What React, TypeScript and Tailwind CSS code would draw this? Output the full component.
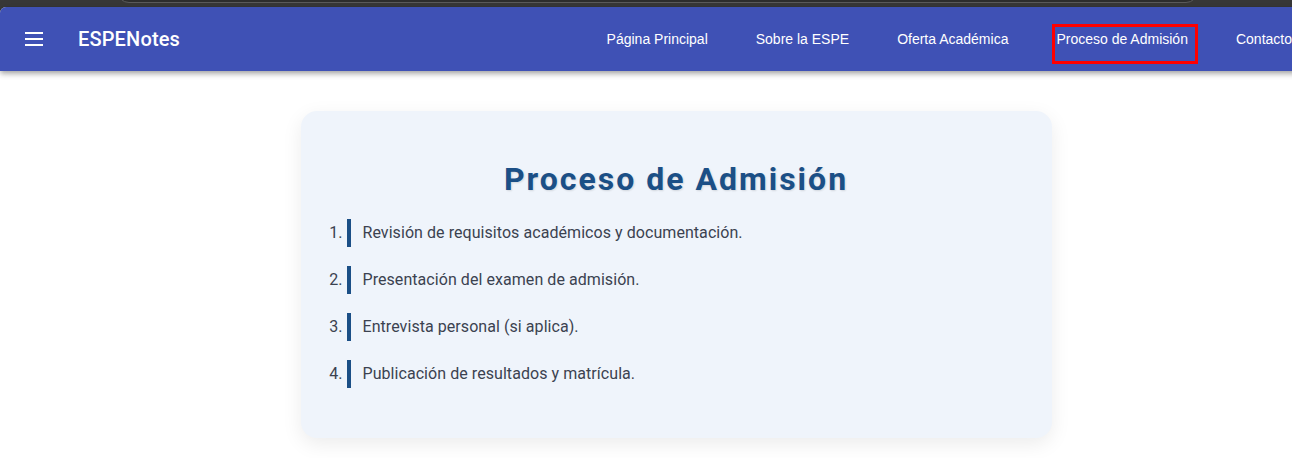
const links = [
  "Página Principal",
  "Sobre la ESPE",
  "Oferta Académica",
  "Proceso de Admisión",
  "Contacto",
];

const steps = [
  "Revisión de requisitos académicos y documentación.",
  "Presentación del examen de admisión.",
  "Entrevista personal (si aplica).",
  "Publicación de resultados y matrícula.",
];

function MenuIcon() {
  return (
    <svg width="18" height="14" viewBox="0 0 18 14" fill="white">
      <rect x="0" y="0" width="18" height="2" />
      <rect x="0" y="6" width="18" height="2" />
      <rect x="0" y="12" width="18" height="2" />
    </svg>
  );
}

export default function App() {
  return (
    <div className="min-h-screen w-full overflow-hidden bg-[#383838]">
      {/* Browser chrome strip */}
      <div className="relative h-[7px] bg-[#383838]">
        <div className="absolute left-[117px] top-[-30px] h-[33px] w-[1081px] rounded-[12px] border border-[#5c5c5c] bg-[#2e2e2e]" />
      </div>

      <div className="min-h-[451px] w-[1352px] rounded-tl-[6px] bg-white">
        {/* Navbar */}
        <header className="relative z-10 flex h-16 items-center rounded-tl-[6px] bg-[#3f51b5] px-[25px] shadow-[0_2px_4px_-1px_rgba(0,0,0,0.2),0_4px_5px_0_rgba(0,0,0,0.14),0_1px_10px_0_rgba(0,0,0,0.12)]">
          <button className="flex items-center">
            <MenuIcon />
          </button>
          <span className="ml-[35px] text-[20px] font-medium tracking-[0.15px] text-white [font-family:Roboto,sans-serif]">
            ESPENotes
          </span>
          <nav className="ml-auto mr-[35px] flex items-center gap-12 text-[14px] text-white [font-family:'Liberation_Sans',Arial,sans-serif]">
            {links.map((l) => (
              <a key={l} className="relative">
                {l}
                {l === "Proceso de Admisión" && (
                  <span className="absolute left-[-4px] right-[-10px] top-[-5px] h-[40px] border-[3px] border-[#ff0000]" />
                )}
              </a>
            ))}
          </nav>
        </header>

        {/* Main */}
        <main className="pt-10 pb-10">
          <section className="mx-auto w-[751px] rounded-2xl bg-[#eff4fb] px-6 pt-6 pb-[31px] shadow-[0_6px_20px_rgba(0,0,0,0.08)] [font-family:Roboto,sans-serif]">
            <h2 className="mt-[25px] mb-[21px] text-center text-[32px] font-bold leading-[38px] tracking-[2px] text-[#1b4f86] [text-shadow:1px_1px_2px_rgba(0,0,0,0.12)]">
              Proceso de Admisión
            </h2>
            <ol className="list-decimal pl-[22px] text-[16px] tracking-[0.06px] text-[#3b4250]">
              {steps.map((s) => (
                <li
                  key={s}
                  className="mb-[19px] border-l-4 border-[#1b4f86] py-[2px] pl-3 leading-6 marker:text-[#3b4250]"
                >
                  {s}
                </li>
              ))}
            </ol>
          </section>
        </main>
      </div>
    </div>
  );
}
